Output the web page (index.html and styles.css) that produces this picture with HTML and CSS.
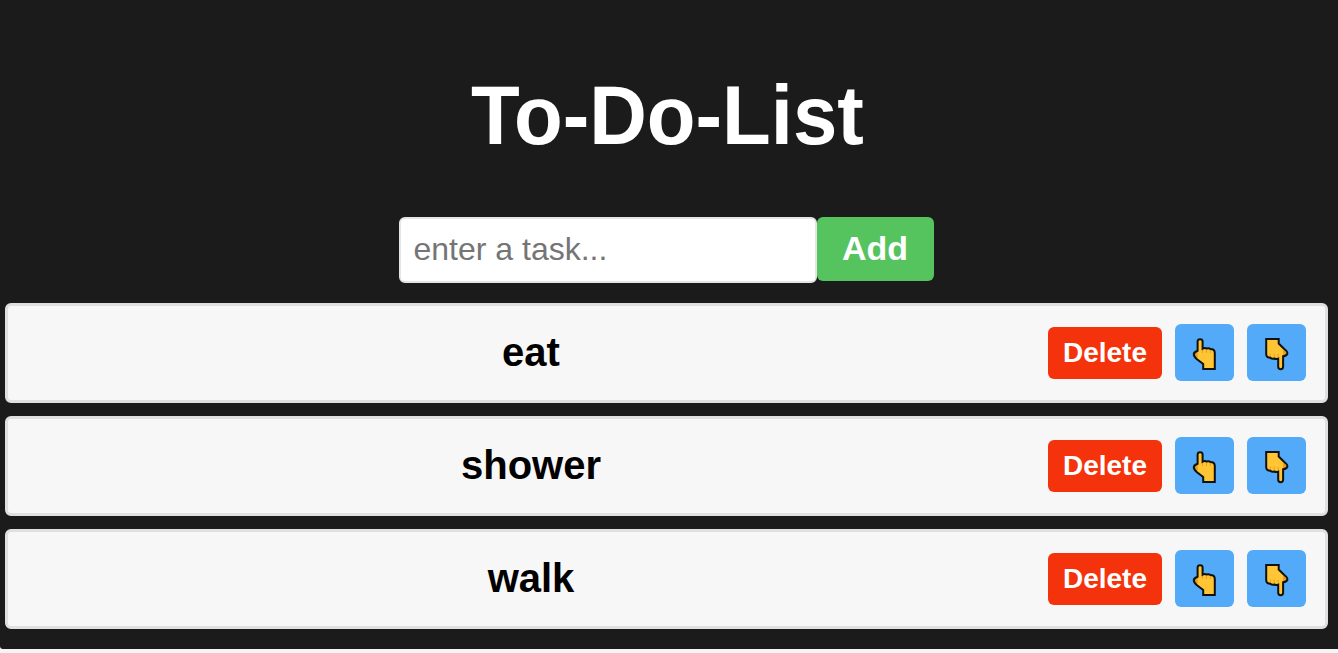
FILE: index.html
```html
<!DOCTYPE html>
<html lang="en">
<head>
<meta charset="utf-8">
<title>To-Do-List</title>
<link rel="stylesheet" href="styles.css">
</head>
<body>
<svg class="symbols" aria-hidden="true">
  <symbol id="hand-up" viewBox="0 0 70 70">
    <path d="M27.6 23.6c0-3.300 5-3.300 5 0v7.100c1.400-.8 3-.7 4-.2 1.500-.4 3-.2 3.900.5 2.600 0 4.300 1.500 4.300 3.900v16.100H33.200v-5L27 41.300c-2.100-1.800-3.300-3.200-3.200-5.300.2-1.400 1.700-2.400 3.800-3.200z" fill="#ffc534"/>
    <path d="M24.300 35.200l3.300-2v6.300c-2.200-.7-3.300-2.200-3.300-4.300z" fill="#e89b22"/>
    <path d="M32.600 31v4M36.500 31.500v3.500M40.300 32v3" stroke="#dd991f" stroke-width=".8" fill="none"/>
    <path d="M27.600 23.600c0-3.300 5-3.300 5 0v7.100c1.400-.8 3-.7 4-.2 1.500-.4 3-.2 3.900.5 2.600 0 4.300 1.500 4.300 3.900v16.100H33.200v-5L27 41.300c-2.100-1.800-3.300-3.200-3.200-5.300.2-1.400 1.700-2.400 3.800-3.200z" fill="none" stroke="#111" stroke-width="2"/>
  </symbol>
  <symbol id="hand-down" viewBox="0 0 70 70">
    <path d="M26.200 21h12.500v4.500l5.300 5.300c2.400 1.800 3.700 3.300 3.300 5.100-.4 1.300-1.800 2-4.200 2.400v10.400c0 3.300-4.900 3.300-4.900 0v-8c-1.400.6-2.900.4-4-.2-1.500.4-3.100.1-3.900-.8-2.400 0-4.100-1.300-4.100-3.700z" fill="#ffc534"/>
    <path d="M43.100 31.500l3.500 3.500c.5 1.200-.8 2.300-3.500 2.700z" fill="#e89b22"/>
    <path d="M30.300 35.500v3.500M34.200 35.500v4M38.100 36v4" stroke="#dd991f" stroke-width=".8" fill="none"/>
    <path d="M26.200 21h12.500v4.500l5.300 5.300c2.400 1.800 3.700 3.300 3.300 5.100-.4 1.300-1.800 2-4.200 2.400v10.400c0 3.300-4.900 3.300-4.900 0v-8c-1.400.6-2.900.4-4-.2-1.500.4-3.100.1-3.900-.8-2.400 0-4.100-1.300-4.100-3.700z" fill="none" stroke="#111" stroke-width="2"/>
  </symbol>
</svg>
<main class="app">
  <h1 class="title">To-Do-List</h1>
  <div class="entry">
    <input class="task-input" type="text" placeholder="enter a task...">
    <button class="add-button">Add</button>
  </div>
  <ol class="tasks">
    <li class="task">
      <span class="text">eat</span>
      <button class="delete-button">Delete</button>
      <button class="move-button" aria-label="Move up"><svg class="hand"><use href="#hand-up"/></svg></button>
      <button class="move-button" aria-label="Move down"><svg class="hand"><use href="#hand-down"/></svg></button>
    </li>
    <li class="task">
      <span class="text">shower</span>
      <button class="delete-button">Delete</button>
      <button class="move-button" aria-label="Move up"><svg class="hand"><use href="#hand-up"/></svg></button>
      <button class="move-button" aria-label="Move down"><svg class="hand"><use href="#hand-down"/></svg></button>
    </li>
    <li class="task">
      <span class="text">walk</span>
      <button class="delete-button">Delete</button>
      <button class="move-button" aria-label="Move up"><svg class="hand"><use href="#hand-up"/></svg></button>
      <button class="move-button" aria-label="Move down"><svg class="hand"><use href="#hand-down"/></svg></button>
    </li>
  </ol>
</main>
</body>
</html>
```
FILE: styles.css
```css
* { box-sizing: border-box; }
html { background: #f5f5f5; }
body {
  margin: 0;
  height: 653px;
  overflow: hidden;
  font-family: Arial, "Liberation Sans", sans-serif;
}
.symbols { display: none; }
.app {
  height: 649px;
  padding: 70px 10px 0 5px;
  background: #1b1b1b;
  border-bottom-left-radius: 3px;
}
.title {
  margin: 0;
  padding-left: 2px;
  height: 147px;
  font-size: 80px;
  line-height: 94px;
  color: #fff;
  text-align: center;
  transform: scale(.997, 1.04);
  transform-origin: 50% 74px;
}
.entry {
  display: flex;
  justify-content: center;
  align-items: flex-start;
  height: 86px;
  padding-right: 1px;
}
.task-input {
  width: 418px;
  height: 66px;
  padding: 0 13px 2px;
  border: 2px solid #e5e5e5;
  border-radius: 6px;
  background: #fff;
  font: 32px Arial, "Liberation Sans", sans-serif;
}
.task-input::placeholder { color: #757575; }
button {
  padding: 0;
  border: 0;
  color: #fff;
  font-family: inherit;
  font-weight: bold;
}
.add-button {
  width: 117px;
  height: 64px;
  padding-bottom: 2px;
  border-radius: 6px;
  background: #55c35e;
  font-size: 34px;
}
.tasks {
  display: flex;
  flex-direction: column;
  gap: 13px;
  margin: 0;
  padding: 0;
  list-style: none;
}
.task {
  display: flex;
  align-items: center;
  height: 100px;
  padding: 0 19px 0 13px;
  border: 3px solid #e0e0e0;
  border-radius: 6px;
  background: #f7f7f7;
}
.text {
  flex: 1;
  padding-right: 7px;
  padding-bottom: 2px;
  font-size: 40px;
  font-weight: bold;
  color: #000;
  text-align: center;
}
.delete-button {
  width: 114px;
  height: 52px;
  padding-bottom: 1px;
  border-radius: 6px;
  background: #f4330d;
  font-size: 28px;
}
.move-button {
  width: 59px;
  height: 57px;
  margin-left: 13px;
  margin-bottom: 1px;
  border-radius: 6px;
  background: #52aaf8;
}
.hand {
  display: block;
  width: 70px;
  height: 70px;
  margin: -6px 0 0 -5px;
}
.move-button + .move-button .hand { margin-left: -7px; }
```
